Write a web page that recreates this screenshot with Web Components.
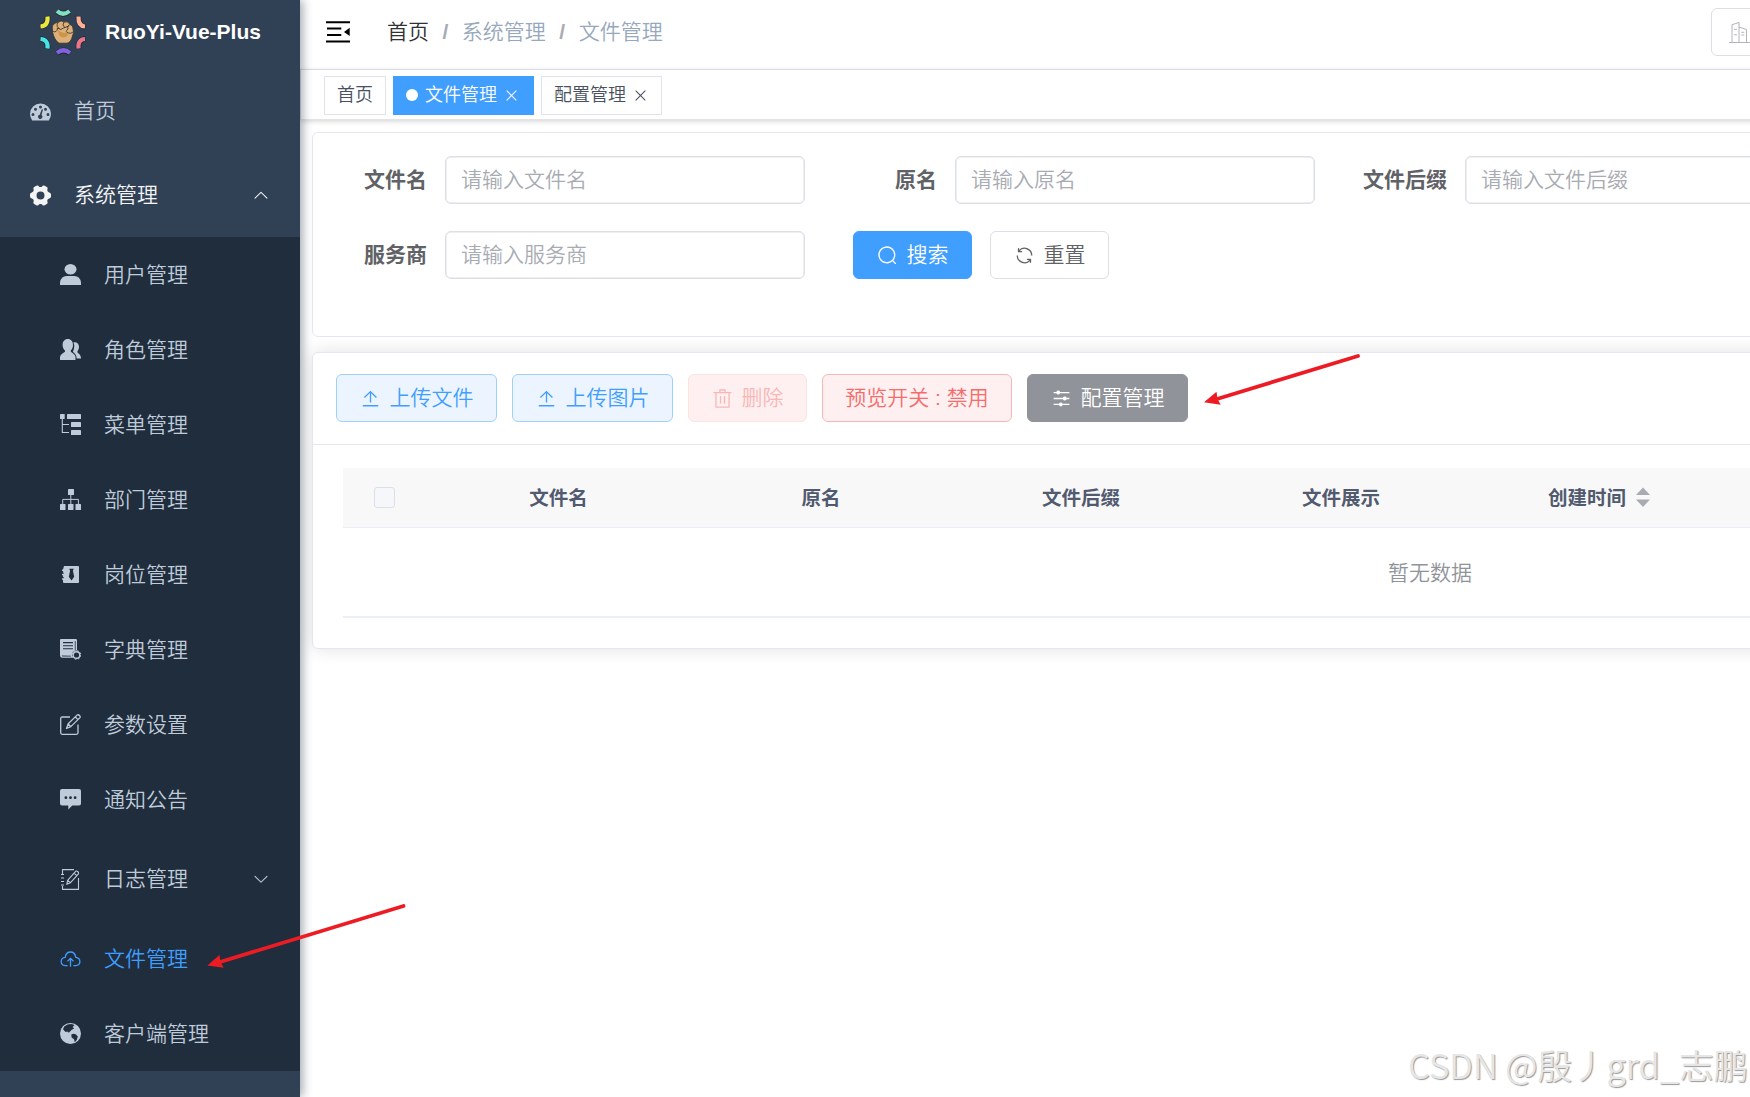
<!DOCTYPE html>
<html lang="zh-CN">
<head>
<meta charset="utf-8">
<title>文件管理</title>
<style>
html, body{
    margin: 0;
    height: 100%;
    overflow: hidden;
    background: #fff;
    font-family: "Liberation Sans", "Noto Sans CJK SC", sans-serif;
    font-size: 21px;
    font-weight: 350;
}
</style>
</head>
<body>
<ry-app></ry-app>

<script>
// icons: [viewBox, markup]
const icons = {
    dashboard: ["0 0 21 21", `<path fill-rule="evenodd" d="M2.2 19.6Q0 16.500 0 13A10.500 10.500 0 0 1 21 13Q21 16.500 18.800 19.600ZM1.500 13.400a1.500 1.500 0 1 0 3 0a1.500 1.500 0 1 0-3 0M4 8.200a1.500 1.500 0 1 0 3 0a1.500 1.500 0 1 0-3 0M9 6a1.500 1.500 0 1 0 3 0a1.500 1.500 0 1 0-3 0M14 8.200a1.500 1.500 0 1 0 3 0a1.500 1.500 0 1 0-3 0M16.500 13.400a1.500 1.500 0 1 0 3 0a1.500 1.500 0 1 0-3 0M11.800 8.300L9.700 13.700A2.100 2.100 0 1 0 11.500 14.100L13 8.600Z"/>`],
    gear: ["0 0 21 21", `<path fill-rule="evenodd" d="M6.300.8Q8.300-.2 9 1.700Q10.500 2.400 12 1.700Q12.700-.2 14.700.8L17.200 2.300Q18 3.400 17.200 5Q17.300 7 19.200 7.400Q21 8 21 9.500V11.500Q21 13 19.200 13.600Q17.300 14 17.200 16Q18 17.600 17.200 18.700L14.700 20.200Q12.700 21.200 12 19.300Q10.500 18.600 9 19.300Q8.300 21.200 6.300 20.200L3.800 18.700Q3 17.600 3.800 16Q3.700 14 1.800 13.600Q0 13 0 11.500V9.500Q0 8 1.800 7.400Q3.700 7 3.800 5Q3 3.400 3.800 2.300ZM10.500 6.500a4 4 0 1 0 0 8a4 4 0 1 0 0-8"/>`],
    user: ["0 0 21 21", `<ellipse cx="10.500" cy="5.200" rx="6" ry="5.200"/><path d="M0 18.500Q1 12 6.500 12H14.500Q20 12 21 18.500V21H0Z"/>`],
    peoples: ["0 0 21 21", `<path d="M7.800 0C11 0 13 2.500 13 6C13 8.500 12 10.500 10.800 11.500Q10.500 13 11.500 13.300Q15.500 15.500 15.500 18.500V21H0V18.500Q0 15.500 4.300 13.300Q5.300 13 5 11.500C3.600 10.500 2.600 8.500 2.600 6C2.600 2.500 4.600 0 7.800 0Z"/><path d="M13.400 3.400C16.500 2.600 19 4.700 19 8Q19 10.500 17.600 12Q17 13.500 18 14Q21 16 21 19.500H16.700Q16.600 15.500 12.900 12.700Q14.300 10 14.300 7Q14.300 5 13.400 3.400Z"/>`],
    tree: ["0 0 21 21", `<rect width="4.700" height="5" rx=".6"/><rect x="7" width="14" height="5" rx=".6"/><rect x="11" y="8" width="10" height="5" rx=".6"/><rect x="11" y="16" width="10" height="5" rx=".6"/><path d="M2.300 4V18.500H9M2.300 10.500H9" fill="none" stroke="currentColor" stroke-width="1.100"/>`],
    org: ["0 0 21 21", `<rect x="8" width="6" height="6" rx=".5"/><rect y="15" width="5.500" height="6" rx=".5"/><rect x="8" y="15" width="5.500" height="6" rx=".5"/><rect x="15.500" y="15" width="5.500" height="6" rx=".5"/><path d="M10.800 5V16M2.700 16V10.400H18.400V16" fill="none" stroke="currentColor" stroke-width="1"/>`],
    post: ["0 0 21 21", `<path fill-rule="evenodd" d="M4 2H18Q19 2 19 3V18Q19 19 18 19H4Q3 19 3 18V15.700H2V14.200H3.700V13H3V11.300H2V9.700H3.700V8.500H3V7H2V5.500H3ZM9.200 4.700L10.100 6.700L8.800 12.800L11.500 16.500L14.200 12.800L12.900 6.700L13.800 4.700Z"/>`],
    dict: ["0 0 21 21", `<path fill-rule="evenodd" d="M0 1Q0 0 1 0H16Q17 0 17 1.500V11.500Q12 11.500 12 16Q12 17.800 13 18.800H2Q0 18.600 0 16.500ZM3 3V4.300H13V3ZM3 6.200V7.300H13V6.200ZM3 9.300V10.300H13V9.300ZM1.700 16.400Q1.800 17.400 3 17.400H11V16.700ZM14.800 2V11.600H15.600V2Z"/><circle cx="16.500" cy="16" r="3.300" fill="none" stroke="currentColor" stroke-width="1.400"/><circle cx="16.500" cy="16" r="4.300" fill="none" stroke="currentColor" stroke-width="1" stroke-dasharray="1.700 1.677"/>`],
    edit: ["0 0 21 21", `<g fill="none" stroke="currentColor" stroke-width="1.300" stroke-linejoin="round"><path d="M10 3H2.200Q.7 3 .7 4.500V18.800Q.7 20.300 2.200 20.300H16.500Q18 20.300 18 18.800V10.500"/><path d="M6.500 14.500L8.200 9.800L17.300 .9Q18.500 .4 19.500 1.500T20 3.600L10.800 12.600ZM15.300 3L18 5.600M8.300 10L10.800 12.600"/></g>`],
    message: ["0 0 21 21", `<path fill-rule="evenodd" d="M2 0H19Q21 0 21 2V14.500Q21 16.500 19 16.500H12.300L8.300 20.500V16.500H2Q0 16.500 0 14.500V2Q0 0 2 0ZM4.500 8.700a1.400 1.400 0 1 0 2.800 0a1.400 1.400 0 1 0-2.800 0M9.100 8.700a1.400 1.400 0 1 0 2.800 0a1.400 1.400 0 1 0-2.800 0M13.700 8.700a1.400 1.400 0 1 0 2.800 0a1.400 1.400 0 1 0-2.800 0"/>`],
    log: ["0 0 21 21", `<g fill="none" stroke="currentColor" stroke-width="1.100" stroke-linejoin="round"><path d="M2.500 6V.6H14M2.500 17V20.400H18.500V9M1 5.500H4M1 9H4M1 12.500H4M1 16H4"/><path d="M6.800 15.300L7.600 11.300L15.600 2.300Q16.600 1.600 17.700 2.500T18.500 4.800L10.500 13.700ZM14 4.200L16.800 6.600M7.600 11.300L10.500 13.700"/></g>`],
    cloud: ["0 0 21 21", `<path d="M7.600 17.700H5.200Q1.200 17.300 1.200 13.500T5.200 9.300Q6 4 10.500 4T15.800 9.300Q19.900 9.800 19.900 13.500T15.800 17.700H13.400M10.500 18.700V10.300M7.500 13.200L10.500 10.300L13.500 13.200" fill="none" stroke="currentColor" stroke-width="1.300"/>`],
    earth: ["0 0 21 21", `<path fill-rule="evenodd" d="M10.500 0a10.500 10.500 0 1 0 0 21a10.500 10.500 0 1 0 0-21M4.200 3.500Q8 .6 12.300 1.200L14.500 2L12.500 4.300L14.300 5.300L11.200 7.200L8.800 9.800L7.300 8.500L5.500 9L3 6.200ZM11.300 11.500Q14 9.800 16 11.500L17.800 13.600Q17.500 17 14.800 19.200L14 16.200L11.600 14.500Z"/>`],
    up: ["0 0 1024 1024", `<path d="M512 398 831 710a30 30 0 0 0 43-43L534 336a32 32 0 0 0-44 0L150 667a30 30 0 0 0 43 43z"/>`],
    down: ["0 0 1024 1024", `<path d="M831.872 340.864 512 652.672 192.128 340.864a30.592 30.592 0 0 0-42.752 0 29.120 29.120 0 0 0 0 41.600L489.664 714.240a32 32 0 0 0 44.672 0l340.288-331.712a29.120 29.120 0 0 0 0-41.728 30.592 30.592 0 0 0-42.752 0z"/>`],
    fold: ["0 0 24 22", `<path d="M0 .3H24V2.300H0ZM1 6.500H15.300V8.500H1ZM1 13H15.300V15H1ZM0 19.500H24V21.500H0ZM23.700 6.800V15L18 10.900Z"/>`],
    close: ["0 0 1024 1024", `<path d="M764.288 214.592 512 466.880 259.712 214.592a31.936 31.936 0 0 0-45.120 45.120L466.752 512 214.528 764.224a31.936 31.936 0 1 0 45.120 45.184L512 557.184l252.288 252.288a31.936 31.936 0 0 0 45.120-45.120L557.120 512.064l252.288-252.352a31.936 31.936 0 1 0-45.120-45.184z"/>`],
    upload: ["0 0 1024 1024", `<path d="M160 832h704a32 32 0 1 1 0 64H160a32 32 0 1 1 0-64m384-578.304V704h-64V247.296L237.248 490.048 192 444.800 508.800 128l316.800 316.800-45.312 45.248z"/>`],
    search: ["0 0 1024 1024", `<path d="m795.904 750.720 124.992 124.928a32 32 0 0 1-45.248 45.248L750.656 795.904a416 416 0 1 1 45.248-45.248zM480 832a352 352 0 1 0 0-704 352 352 0 0 0 0 704"/>`],
    refresh: ["0 0 1024 1024", `<path d="M771.776 794.880A384 384 0 0 1 128 512h64a320 320 0 0 0 555.712 216.448H654.720a32 32 0 1 1 0-64h149.056a32 32 0 0 1 32 32v148.928a32 32 0 1 1-64 0v-50.560zM276.288 295.616h92.992a32 32 0 0 1 0 64H220.160a32 32 0 0 1-32-32V178.560a32 32 0 0 1 64 0v50.560A384 384 0 0 1 896.128 512h-64a320 320 0 0 0-555.776-216.384z"/>`],
    delete: ["0 0 1024 1024", `<path d="M160 256H96a32 32 0 0 1 0-64h256V95.936a32 32 0 0 1 32-32h256a32 32 0 0 1 32 32V192h256a32 32 0 1 1 0 64h-64v672a32 32 0 0 1-32 32H192a32 32 0 0 1-32-32zm448-64v-64H416v64zM224 896h576V256H224zm192-128a32 32 0 0 1-32-32V416a32 32 0 0 1 64 0v320a32 32 0 0 1-32 32m192 0a32 32 0 0 1-32-32V416a32 32 0 0 1 64 0v320a32 32 0 0 1-32 32"/>`],
    operation: ["0 0 1024 1024", `<path d="M389.440 768a96.064 96.064 0 0 1 181.120 0H896v64H570.560a96.064 96.064 0 0 1-181.120 0H128v-64zm192-288a96.064 96.064 0 0 1 181.120 0H896v64H762.560a96.064 96.064 0 0 1-181.120 0H128v-64zm-320-288a96.064 96.064 0 0 1 181.120 0H896v64H442.560a96.064 96.064 0 0 1-181.120 0H128v-64z"/>`],
    company: ["0 0 21 21", `<path d="M0 20.500H21M3 20V2.700L10 .5V20M10 5L17.500 7.500V20M5 7.300H8M5 12.800H8M12.300 10.300H15.300M12.300 13H15.300" fill="none" stroke="currentColor" stroke-width=".9"/>`]
};

// attach an open shadow root and fill it
function shadow(el, html){
    const template = document.createElement("template");
    template.innerHTML = html;
    el.attachShadow({mode: "open"});
    el.shadowRoot.appendChild(template.content.cloneNode(true));
}

class RyIcon extends HTMLElement{
    connectedCallback(){
        const [box, markup] = icons[this.getAttribute("name")];
        shadow(this, `
<style>
:host{
    display: block;
    flex: none;
    width: 21px;
    height: 21px;
    white-space: normal;
}
svg{
    display: block;
    width: 100%;
    height: 100%;
    fill: currentColor;
}
</style>
<svg viewBox="${box}">${markup}</svg>`);
    }
}
customElements.define("ry-icon", RyIcon);

class RyLogo extends HTMLElement{
    constructor(){
        super();
        shadow(this, `
<style>
:host{
    display: flex;
    align-items: center;
    box-sizing: border-box;
    height: 69px;
    padding: 0 0 5px 39px;
    color: #fff;
    font-weight: 700;
}
svg{
    width: 48px;
    height: 48px;
    margin-right: 18px;
    flex: none;
}
</style>
<svg viewBox="0 0 48 48">
    <g fill="none" stroke="#1c2a38" stroke-width="5.6">
        <path d="M18 3Q24 8.500 30.500 3M39.500 8Q39 18 46.500 19M46.500 31Q38.500 31.500 39.500 41M31 45.500Q24.500 39.500 18 45.500M8.500 41Q9.500 31.500 1 31M1 18.500Q9.500 18 8.500 8"/>
    </g>
    <g fill="none" stroke-width="4.200">
        <path stroke="#82e0c0" d="M18 3Q24 8.500 30.500 3"/>
        <path stroke="#ffb091" d="M39.500 8.500Q39 18 46 18.500"/>
        <path stroke="#ee7488" d="M46 31Q38.500 31.500 39.500 40.500"/>
        <path stroke="#8362df" d="M31 45Q24.500 39.500 18 45"/>
        <path stroke="#47e5e5" d="M8.500 40.500Q9.500 31.500 1.500 31"/>
        <path stroke="#eee83d" d="M1.500 18.500Q9.500 18 8.500 8.500"/>
    </g>
    <path d="M13.300 18Q15.500 14.500 19 14.300Q22.500 11.800 25 14Q29 12.500 31 16.500Q34.500 17.500 34 21Q35.500 24 33.500 28Q32 34.500 28 35.200H20Q15.500 32.500 13.500 24Z" fill="#dbb07a" stroke="#3c3027" stroke-width=".8"/>
    <path d="M19 22Q23 26 28 24.500L29 27Q24 32 20 27Z" fill="#cf9547"/>
    <path d="M13.500 23Q18 25.500 18.500 20Q22 23 24.500 20L30 18M19 14.500Q16.500 19 20.500 20.500M25 14Q22.500 17 26 20M31 16.500Q27 18 29 21Q25.500 24 29.500 25Q32 26 34 24" fill="none" stroke="#49392c" stroke-width=".9"/>
</svg>
<span>RuoYi-Vue-Plus</span>`);
    }
}
customElements.define("ry-logo", RyLogo);

class RyMenuItem extends HTMLElement{
    connectedCallback(){
        const arrow = this.getAttribute("arrow");
        shadow(this, `
<style>
:host{
    display: flex;
    align-items: center;
    box-sizing: border-box;
    height: 75px;
    padding: 0 30px 0 60px;
    color: #bfcbd9;
    white-space: nowrap;
}
:host([root]){
    height: 84px;
    padding-left: 30px;
}
:host([arrow="down"]){
    height: 84px;
}
:host([open]){
    color: #f4f4f5;
}
:host([active]){
    color: #409eff;
}
.text{
    flex: 1;
    margin-left: 23px;
    padding-bottom: 4px;
}
.arrow{
    width: 18px;
    height: 18px;
}
</style>
<ry-icon name="${this.getAttribute("icon")}"></ry-icon>
<span class="text"><slot></slot></span>
${arrow ? `<ry-icon class="arrow" name="${arrow}"></ry-icon>` : ""}`);
    }
}
customElements.define("ry-menu-item", RyMenuItem);

class RySidebar extends HTMLElement{
    constructor(){
        super();
        shadow(this, `
<style>
:host{
    display: block;
    position: relative;
    z-index: 2;
    flex: none;
    width: 300px;
    background: #304156;
    box-shadow: 3px 0 9px rgba(0,21,41,.35);
}
.sub{
    background: #1f2d3d;
}
</style>
<ry-logo></ry-logo>
<ry-menu-item root icon="dashboard">首页</ry-menu-item>
<ry-menu-item root open icon="gear" arrow="up">系统管理</ry-menu-item>
<div class="sub">
    <ry-menu-item icon="user">用户管理</ry-menu-item>
    <ry-menu-item icon="peoples">角色管理</ry-menu-item>
    <ry-menu-item icon="tree">菜单管理</ry-menu-item>
    <ry-menu-item icon="org">部门管理</ry-menu-item>
    <ry-menu-item icon="post">岗位管理</ry-menu-item>
    <ry-menu-item icon="dict">字典管理</ry-menu-item>
    <ry-menu-item icon="edit">参数设置</ry-menu-item>
    <ry-menu-item icon="message">通知公告</ry-menu-item>
    <ry-menu-item icon="log" arrow="down">日志管理</ry-menu-item>
    <ry-menu-item icon="cloud" active>文件管理</ry-menu-item>
    <ry-menu-item icon="earth">客户端管理</ry-menu-item>
</div>`);
    }
}
customElements.define("ry-sidebar", RySidebar);

class RyNavbar extends HTMLElement{
    constructor(){
        super();
        shadow(this, `
<style>
:host{
    display: flex;
    align-items: center;
    box-sizing: border-box;
    height: 69px;
    padding: 0 0 6px 26px;
    box-shadow: 0 1.5px 6px rgba(0,21,41,.08);
    color: #97a8be;
    white-space: nowrap;
}
.fold{
    width: 24px;
    height: 22px;
    color: #000;
}
.crumbs{
    display: flex;
    align-items: center;
    margin-left: 37px;
}
.crumbs span{
    padding-bottom: 4px;
}
.home{
    color: #303133;
}
i{
    font-style: normal;
    font-weight: 700;
    color: #a8abb2;
    margin: 0 13.5px;
}
.tenant{
    display: flex;
    align-items: center;
    box-sizing: border-box;
    width: 300px;
    height: 48px;
    margin: 1px 549px 0 auto;
    padding-left: 17px;
    border: 1px solid #dcdfe6;
    border-radius: 6px;
    color: #a8abb2;
}
</style>
<ry-icon class="fold" name="fold"></ry-icon>
<div class="crumbs"><span class="home">首页</span><i>/</i><span>系统管理</span><i>/</i><span>文件管理</span></div>
<div class="tenant"><ry-icon name="company"></ry-icon></div>`);
    }
}
customElements.define("ry-navbar", RyNavbar);

class RyTag extends HTMLElement{
    connectedCallback(){
        const active = this.hasAttribute("active");
        const closable = this.hasAttribute("closable");
        shadow(this, `
<style>
:host{
    display: flex;
    align-items: center;
    box-sizing: border-box;
    height: 39px;
    padding: 0 12px 5px;
    border: 1px solid #e0e3ea;
    color: #495060;
    font-size: 18px;
    white-space: nowrap;
}
:host([active]){
    background: #409eff;
    border-color: #409eff;
    color: #fff;
}
.dot{
    width: 12px;
    height: 12px;
    margin: 3px 7px 0 0;
    border-radius: 50%;
    background: #fff;
}
.close{
    width: 17px;
    height: 17px;
    margin: 5px 0 0 6px;
}
:host([active]) .close{
    margin-right: 1px;
}
</style>
${active ? `<span class="dot"></span>` : ""}<slot></slot>${closable ? `<ry-icon class="close" name="close"></ry-icon>` : ""}`);
    }
}
customElements.define("ry-tag", RyTag);

class RyTags extends HTMLElement{
    constructor(){
        super();
        shadow(this, `
<style>
:host{
    display: flex;
    gap: 7px;
    box-sizing: border-box;
    height: 51px;
    padding: 6px 0 0 23px;
    background: #fff;
    border: 1px solid #d8dce5;
    border-bottom-color: #e4e4e4;
    box-shadow: 0 1.5px 4.5px rgba(0,0,0,.12), 0 0 4.5px rgba(0,0,0,.04);
}
</style>
<slot></slot>`);
    }
}
customElements.define("ry-tags", RyTags);

class RyField extends HTMLElement{
    connectedCallback(){
        shadow(this, `
<style>
:host{
    display: flex;
    align-items: center;
    height: 48px;
    margin-right: 48px;
    white-space: nowrap;
}
label{
    box-sizing: border-box;
    width: 102px;
    padding: 0 18px 4px 0;
    text-align: right;
    font-weight: 700;
    color: #606266;
}
.input{
    display: flex;
    align-items: center;
    box-sizing: border-box;
    width: 360px;
    height: 48px;
    padding: 0 15px 4px;
    border: 1px solid #dcdfe6;
    box-shadow: inset 0 0 0 .5px #dcdfe6;
    border-radius: 6px;
    color: #a8abb2;
}
</style>
<label>${this.getAttribute("label")}</label>
<div class="input"><slot></slot></div>`);
    }
}
customElements.define("ry-field", RyField);

class RyButton extends HTMLElement{
    connectedCallback(){
        const icon = this.getAttribute("icon");
        shadow(this, `
<style>
:host{
    display: flex;
    align-items: center;
    justify-content: center;
    gap: 9px;
    box-sizing: border-box;
    height: 48px;
    padding: 0 22.5px;
    border: 1px solid #dcdfe6;
    border-radius: 6px;
    background: #fff;
    color: #606266;
    white-space: nowrap;
}
:host([type="primary"]){
    background: #409eff;
    border-color: #409eff;
    color: #fff;
}
:host([type="primary-plain"]){
    background: #ecf5ff;
    border-color: #a0cfff;
    color: #409eff;
}
:host([type="danger-plain"]){
    width: 190px;
    background: #fef0f0;
    border-color: #fab6b6;
    color: #f56c6c;
}
:host([type="danger-disabled"]){
    background: #fef0f0;
    border-color: #fde2e2;
    color: #fab6b6;
}
:host([type="info"]){
    background: #909399;
    border-color: #909399;
    color: #fff;
}
span{
    padding-bottom: 4px;
}
</style>
${icon ? `<ry-icon name="${icon}"></ry-icon>` : ""}<span><slot></slot></span>`);
    }
}
customElements.define("ry-button", RyButton);

class RyCard extends HTMLElement{
    constructor(){
        super();
        shadow(this, `
<style>
:host{
    display: block;
    position: relative;
    z-index: 1;
    box-sizing: border-box;
    background: #fff;
    border: 1px solid #e4e7ed;
    border-radius: 6px;
}
:host([hover]){
    z-index: 0;
    box-shadow: 0 0 18px rgba(0,0,0,.12);
}
.header{
    border-bottom: 1px solid #e4e7ed;
}
</style>
<div class="header"><slot name="header"></slot></div>
<slot></slot>`);
        if(!this.hasAttribute("hover")) this.shadowRoot.querySelector(".header").remove();
    }
}
customElements.define("ry-card", RyCard);

class RyTable extends HTMLElement{
    constructor(){
        super();
        shadow(this, `
<style>
:host{
    display: block;
    border-bottom: 2px solid #ebeef5;
}
.head{
    display: grid;
    grid-template-columns: 83px 265px 260px 260px 260px 268px;
    align-items: center;
    justify-items: center;
    box-sizing: border-box;
    height: 60px;
    background: #f8f8f9;
    border-bottom: 1px solid #ebeef5;
    color: #515a6e;
    font-size: 19.5px;
    font-weight: 700;
}
.head span{
    padding-bottom: 2px;
}
.head .check{
    box-sizing: border-box;
    width: 21px;
    height: 21px;
    padding: 0;
    border: 1px solid #dcdfe6;
    border-radius: 3px;
    background: #f5f7fa;
}
.sort{
    display: flex;
    align-items: center;
}
svg{
    width: 14px;
    height: 20px;
    margin: 1px 12px 0 10px;
    fill: #a8abb2;
}
.empty{
    height: 88px;
    line-height: 89px;
    text-align: center;
    color: #909399;
}
</style>
<div class="head">
    <span class="check"></span>
    <span>文件名</span>
    <span>原名</span>
    <span>文件后缀</span>
    <span>文件展示</span>
    <span class="sort">创建时间<svg viewBox="0 0 14 20"><path d="M0 8L7 0.500L14 8ZM0 12.500H14L7 20Z"/></svg></span>
</div>
<div class="empty">暂无数据</div>`);
    }
}
customElements.define("ry-table", RyTable);

class RyApp extends HTMLElement{
    constructor(){
        super();
        shadow(this, `
<style>
:host{
    display: flex;
    position: relative;
    height: 100vh;
    overflow: hidden;
}
main{
    flex: none;
    width: 2260px;
}
.content{
    padding: 12px;
}
.query{
    height: 205px;
    margin-bottom: 15px;
}
.form{
    display: grid;
    grid-template-columns: repeat(3, 510px);
    row-gap: 27px;
    padding: 23px 30px;
}
.actions{
    display: flex;
    gap: 18px;
}
.toolbar{
    display: flex;
    gap: 15px;
    padding: 21px 23px 22px;
}
ry-table{
    margin: 23px 30px 30px;
}
.arrows{
    position: absolute;
    z-index: 3;
    left: 0;
    top: 0;
}
.mark{
    position: absolute;
    z-index: 3;
    right: 2px;
    bottom: 8px;
    font-family: "Noto Sans CJK SC", sans-serif;
    font-size: 34.5px;
    color: #e6e6e6;
    text-shadow: 1px 1px 1px #999;
    white-space: nowrap;
}
</style>
<ry-sidebar></ry-sidebar>
<main>
    <ry-navbar></ry-navbar>
    <ry-tags>
        <ry-tag>首页</ry-tag>
        <ry-tag active closable>文件管理</ry-tag>
        <ry-tag closable>配置管理</ry-tag>
    </ry-tags>
    <div class="content">
        <ry-card class="query">
            <div class="form">
                <ry-field label="文件名">请输入文件名</ry-field>
                <ry-field label="原名">请输入原名</ry-field>
                <ry-field label="文件后缀">请输入文件后缀</ry-field>
                <ry-field label="服务商">请输入服务商</ry-field>
                <div class="actions">
                    <ry-button type="primary" icon="search">搜索</ry-button>
                    <ry-button icon="refresh">重置</ry-button>
                </div>
            </div>
        </ry-card>
        <ry-card hover>
            <div class="toolbar" slot="header">
                <ry-button type="primary-plain" icon="upload">上传文件</ry-button>
                <ry-button type="primary-plain" icon="upload">上传图片</ry-button>
                <ry-button type="danger-disabled" icon="delete">删除</ry-button>
                <ry-button type="danger-plain">预览开关 : 禁用</ry-button>
                <ry-button type="info" icon="operation">配置管理</ry-button>
            </div>
            <ry-table></ry-table>
        </ry-card>
    </div>
</main>
<svg class="arrows" width="1750" height="1097" fill="#ed1c24" stroke="#ed1c24" stroke-linecap="round">
    <path d="M403.500 906L220 962M1358 356L1217 399" stroke-width="3.800"/>
    <path d="M207.300 965.500L219.500 955L220.500 962L223.700 967.700ZM1204 402.300L1216.500 391.800L1217.500 399L1220.700 404.700Z" stroke="none"/>
</svg>
<div class="mark">CSDN @殷丿grd_志鹏</div>`);
    }
}
customElements.define("ry-app", RyApp);
</script>
</body>
</html>
